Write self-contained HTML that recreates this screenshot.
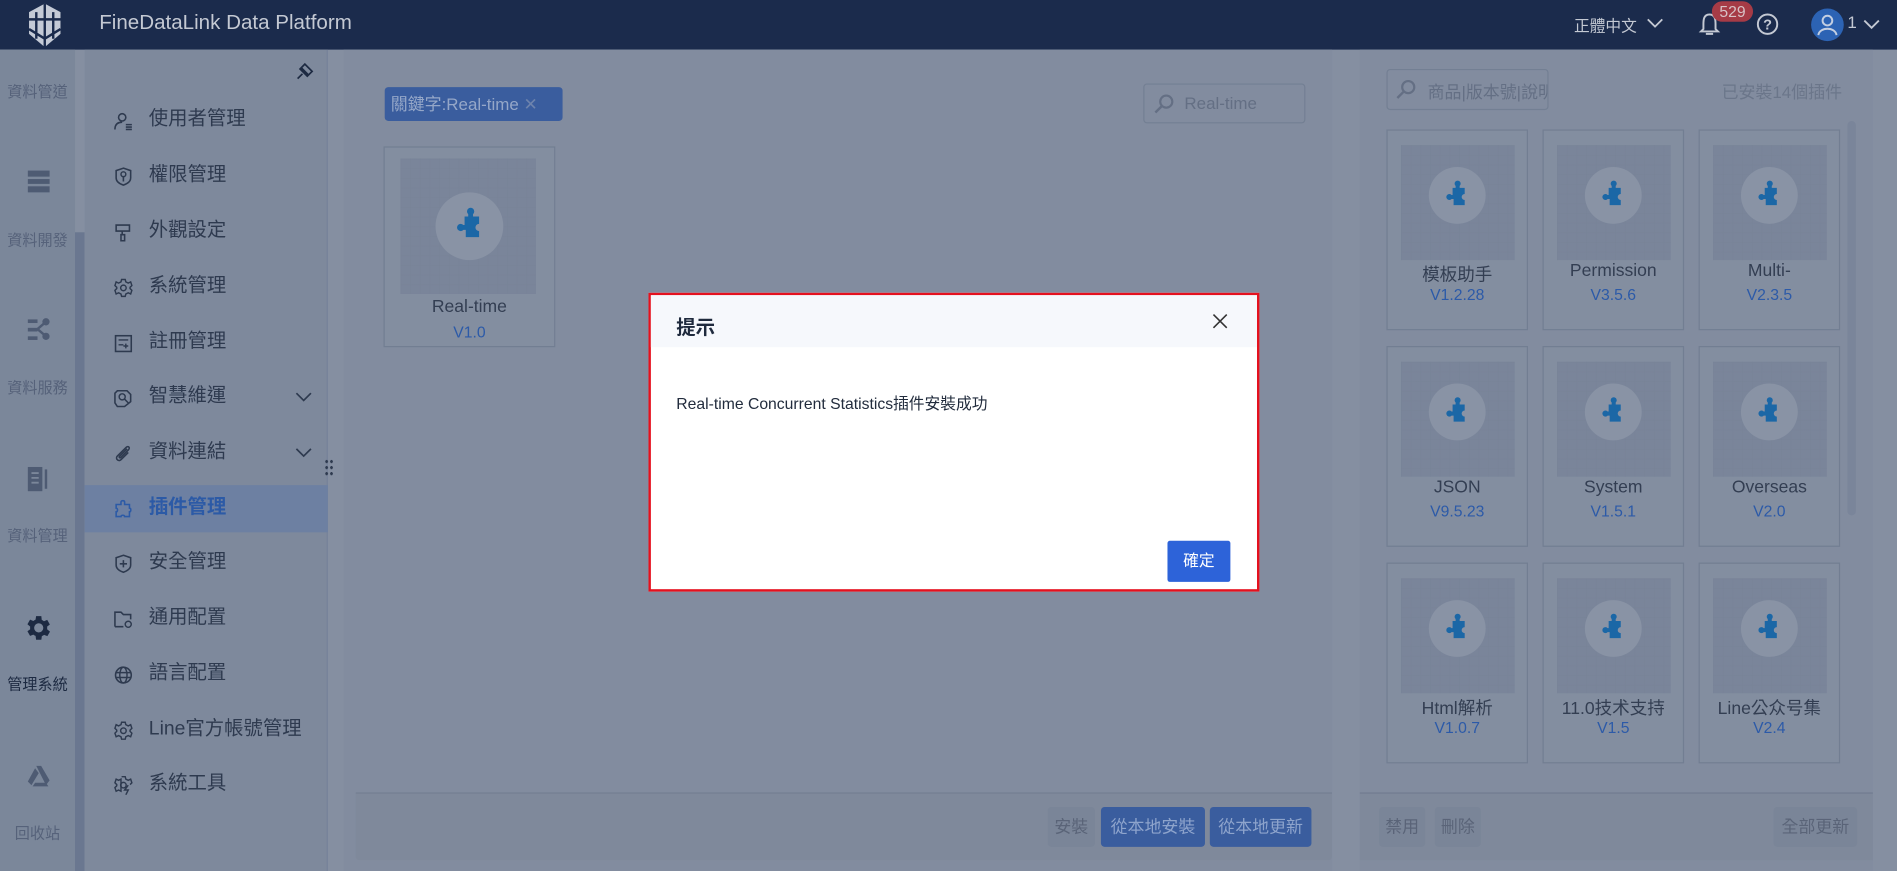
<!DOCTYPE html>
<html><head><meta charset="utf-8"><style>
*{box-sizing:border-box;margin:0;padding:0}
html,body{width:1897px;height:871px;overflow:hidden;background:#858fa1}
#s{position:absolute;left:0;top:0;width:1568px;height:720px;transform:scale(1.20982);transform-origin:0 0;font-family:"Liberation Sans","Noto Sans CJK TC",sans-serif;background:#858fa1}
.a{position:absolute}
.hdr{left:0;top:0;width:1568px;height:41px;background:#1b2b4c}
.rail{left:0;top:41px;width:62px;height:679px;background:#7b879a}
.rt{position:absolute;left:0;width:62px;text-align:center;font-size:12.5px;color:#56627a}
.sub{left:70px;top:41px;width:201px;height:679px;background:#7e899c;border-right:1px solid #76829a}
.mi{position:absolute;left:53px;font-size:16px;color:#2e3a4f;line-height:20px}
.ic{position:absolute;left:24px;width:16px;height:16px}
.panel{background:#828c9f}
.card{position:absolute;width:117px;height:166px;border:1px solid #727e92;background:#838ea0}
.card .im{position:absolute;left:11px;top:12px;width:94px;height:95px;background:#7a859a;background-image:linear-gradient(#76819555 1px,transparent 1px),linear-gradient(90deg,#76819555 1px,transparent 1px);background-size:8px 8px}
.card .ci{position:absolute;left:34px;top:30px;width:47px;height:47px;border-radius:50%;background:#8993a5}
.card .nm{position:absolute;left:0;width:100%;top:108px;text-align:center;font-size:14.5px;color:#333e52}
.card .vr{position:absolute;left:0;width:100%;top:128px;text-align:center;font-size:13px;color:#2c5aa8}
.btn{position:absolute;height:33px;border-radius:3px;font-size:14px;line-height:33px;text-align:center;color:#5a6478;background:#7a8598}
.bb{background:#3a5d9e;color:#8ea4cc}
</style></head><body><div id="s">
<div class="a hdr">
<svg class="a" style="left:22px;top:2px" width="30" height="38" viewBox="0 0 30 38"><path d="M15 1 L28 8 L28 26 L15 37 L2 26 L2 8Z" fill="#c4cad6"/><path d="M15 1 L15 37 M2 14 L28 14 M2 22 L15 30 L28 22 M8 8 L8 30 M22 8 L22 30" stroke="#1b2b4c" stroke-width="2" fill="none"/></svg>
<div class="a" style="left:82px;top:9px;font-size:17px;color:#c4c9d3">FineDataLink Data Platform</div>
<div class="a" style="left:1301px;top:11px;font-size:13px;color:#c4c9d3">正體中文</div>
<svg class="a" style="left:1361px;top:14px" width="14" height="10"><path d="M1 2 L7 8 L13 2" stroke="#c4c9d3" stroke-width="1.5" fill="none"/></svg>
<svg class="a" style="left:1404px;top:10px" width="18" height="20"><path d="M9 2 C4 2 4 7 4 10 L4 14 L2 16 L16 16 L14 14 L14 10 C14 7 14 2 9 2Z M6 18 L12 18" stroke="#c4c9d3" stroke-width="1.6" fill="none"/></svg>
<div class="a" style="left:1415px;top:1px;width:34px;height:17px;border-radius:9px;background:#a63b46;color:#d8c2c6;font-size:13px;text-align:center;line-height:17px">529</div>
<svg class="a" style="left:1451px;top:10px" width="20" height="20"><circle cx="10" cy="10" r="8" stroke="#c4c9d3" stroke-width="1.6" fill="none"/><text x="10" y="14.5" font-size="12" text-anchor="middle" fill="#c4c9d3" font-family="Liberation Sans" font-weight="bold">?</text></svg>
<div class="a" style="left:1497px;top:7px;width:27px;height:27px;border-radius:50%;background:#2c63b4"></div>
<svg class="a" style="left:1497px;top:7px" width="27" height="27"><circle cx="13.5" cy="10" r="4" stroke="#c4cfe2" stroke-width="1.6" fill="none"/><path d="M6 22 C7 15 20 15 21 22" stroke="#c4cfe2" stroke-width="1.6" fill="none"/></svg>
<div class="a" style="left:1527px;top:10px;font-size:14px;color:#c4c9d3">1</div>
<svg class="a" style="left:1540px;top:15px" width="14" height="10"><path d="M1 2 L7 8 L13 2" stroke="#c4c9d3" stroke-width="1.5" fill="none"/></svg>
</div>
<div class="a rail">
<div class="rt" style="top:24px">資料管道</div>
<svg class="a" style="left:22px;top:99px" width="20" height="20"><rect x="1" y="1" width="18" height="5" fill="#4e5b73"/><rect x="1" y="8" width="18" height="4" fill="#4e5b73"/><rect x="1" y="14" width="18" height="5" fill="#4e5b73"/></svg>
<div class="rt" style="top:147px">資料開發</div>
<svg class="a" style="left:22px;top:221px" width="20" height="20"><rect x="1" y="2" width="8" height="3" fill="#4e5b73"/><rect x="1" y="9" width="8" height="3" fill="#4e5b73"/><rect x="1" y="16" width="8" height="3" fill="#4e5b73"/><circle cx="16" cy="4" r="3" fill="#4e5b73"/><circle cx="16" cy="16" r="3" fill="#4e5b73"/><path d="M9 10 L16 4 M9 10 L16 16" stroke="#4e5b73" stroke-width="2"/></svg>
<div class="rt" style="top:269px">資料服務</div>
<svg class="a" style="left:22px;top:344px" width="20" height="22"><rect x="1" y="1" width="12" height="20" fill="#4e5b73"/><rect x="15" y="3" width="2" height="16" fill="#4e5b73"/><path d="M4 6 H10 M4 10 H10 M4 14 H10" stroke="#7b879a" stroke-width="1.5"/></svg>
<div class="rt" style="top:391px">資料管理</div>
<svg class="a" style="left:19px;top:465px" width="26" height="26" viewBox="0 0 24 24"><path fill="#1d2a42" d="M19.4 13a7.5 7.5 0 000-2l2.1-1.6-2-3.5-2.5 1a7 7 0 00-1.7-1L15 3h-4l-.4 2.7a7 7 0 00-1.7 1l-2.5-1-2 3.5L6.5 11a7.5 7.5 0 000 2l-2.1 1.6 2 3.5 2.5-1a7 7 0 001.7 1L11 21h4l.4-2.7a7 7 0 001.7-1l2.5 1 2-3.5zM13 15.5a3.5 3.5 0 110-7 3.5 3.5 0 010 7z" transform="translate(-1 0)"/></svg>
<div class="rt" style="top:514px;color:#1d2a42">管理系統</div>
<svg class="a" style="left:22px;top:590px" width="20" height="20"><path d="M8 2 L12 2 L19 14 L16 18 Z" fill="#4e5b73"/><path d="M7 4 L1 15 L4 18 L10 8Z" fill="#4e5b73"/><path d="M5 19 L18 19 L16 16 L7 16Z" fill="#4e5b73"/></svg>
<div class="rt" style="top:637px">回收站</div>
</div>
<div class="a" style="left:62px;top:192px;width:8px;height:528px;background:#6a7790"></div>
<div class="a sub">
<svg class="a" style="left:173px;top:10px" width="17" height="17"><path d="M3 14 L7 10 M6 5 L12 11 M9 2 L15 8 L11 12 L5 6Z" stroke="#1d2a42" stroke-width="1.4" fill="none"/></svg>
<div class="a" style="left:0;top:360px;width:201px;height:39px;background:#6d80a2"></div>
<svg class="ic" style="top:51px" viewBox="0 0 16 16"><circle cx="7" cy="5" r="3" stroke="#2e3a4f" stroke-width="1.3" fill="none"/><path d="M1 15 C1 10 4 9 7 9 M10 11 H15 M10 13 H15 M10 15 H15" stroke="#2e3a4f" stroke-width="1.3" fill="none"/></svg><div class="mi" style="top:48px">使用者管理</div>
<svg class="ic" style="top:97px" viewBox="0 0 16 16"><path d="M8 1 L14 3 L14 9 C14 12 11 14 8 15 C5 14 2 12 2 9 L2 3Z" stroke="#2e3a4f" stroke-width="1.3" fill="none"/><circle cx="8" cy="6" r="2" stroke="#2e3a4f" stroke-width="1.2" fill="none"/><path d="M8 8 V12" stroke="#2e3a4f" stroke-width="1.3"/></svg><div class="mi" style="top:94px">權限管理</div>
<svg class="ic" style="top:143px" viewBox="0 0 16 16"><path d="M2 2 H13 V7 H2Z M7 7 V10 M6 10 H9 V15 H6Z" stroke="#2e3a4f" stroke-width="1.3" fill="none"/></svg><div class="mi" style="top:140px">外觀設定</div>
<svg class="ic" style="top:189px" viewBox="0 0 16 16"><path d="M6.5 1 H9.5 L10 3 L12 4 L14 3 L15 6 L13.5 7.5 V8.5 L15 10 L14 13 L12 12 L10 13 L9.5 15 H6.5 L6 13 L4 12 L2 13 L1 10 L2.5 8.5 V7.5 L1 6 L2 3 L4 4 L6 3Z" stroke="#2e3a4f" stroke-width="1.2" fill="none"/><circle cx="8" cy="8" r="2.3" stroke="#2e3a4f" stroke-width="1.2" fill="none"/></svg><div class="mi" style="top:186px">系統管理</div>
<svg class="ic" style="top:235px" viewBox="0 0 16 16"><rect x="1.5" y="1.5" width="13" height="13" stroke="#2e3a4f" stroke-width="1.3" fill="none"/><path d="M4 5 H12 M4 9 H8 M10 8 V12 M8 10 H12" stroke="#2e3a4f" stroke-width="1.2"/></svg><div class="mi" style="top:232px">註冊管理</div>
<svg class="ic" style="top:280px" viewBox="0 0 16 16"><path d="M3 2 H11 L14 5 V11 L9 15 H3 L1 12 V4Z" stroke="#2e3a4f" stroke-width="1.3" fill="none"/><circle cx="7" cy="7" r="2.5" stroke="#2e3a4f" stroke-width="1.2" fill="none"/><path d="M9 9 L12 12" stroke="#2e3a4f" stroke-width="1.3"/></svg><div class="mi" style="top:277px">智慧維運</div>
<svg class="a" style="left:174px;top:282px" width="14" height="10"><path d="M1 2 L7 8 L13 2" stroke="#2e3a4f" stroke-width="1.4" fill="none"/></svg>
<svg class="ic" style="top:326px" viewBox="0 0 16 16"><path d="M11 4 L5 10 C4 11 5 12 6 11 L12 5 C14 3 12 1 10 3 L3 10 C1 12 4 15 6 13 L12 7" stroke="#2e3a4f" stroke-width="1.3" fill="none"/></svg><div class="mi" style="top:323px">資料連結</div>
<svg class="a" style="left:174px;top:328px" width="14" height="10"><path d="M1 2 L7 8 L13 2" stroke="#2e3a4f" stroke-width="1.4" fill="none"/></svg>
<svg class="ic" style="top:372px" viewBox="0 0 16 16"><path d="M6 2 C6 0.5 9 0.5 9 2 V4 H13 V7 C14.5 7 14.5 10 13 10 V14 H9 C9 12.5 6 12.5 6 14 H2 V10 C3.5 10 3.5 7 2 7 V4 H6Z" stroke="#2c5aa6" stroke-width="1.3" fill="none"/></svg><div class="mi" style="top:369px;color:#2c5aa6;font-weight:bold">插件管理</div>
<svg class="ic" style="top:417px" viewBox="0 0 16 16"><path d="M8 1 L14 3 L14 9 C14 12 11 14 8 15 C5 14 2 12 2 9 L2 3Z M8 5 V11 M5 8 H11" stroke="#2e3a4f" stroke-width="1.3" fill="none"/></svg><div class="mi" style="top:414px">安全管理</div>
<svg class="ic" style="top:463px" viewBox="0 0 16 16"><path d="M1 14 V2 H6 L8 4 H14 V8 M1 14 H8" stroke="#2e3a4f" stroke-width="1.3" fill="none"/><circle cx="12" cy="12" r="2.5" stroke="#2e3a4f" stroke-width="1.2" fill="none"/></svg><div class="mi" style="top:460px">通用配置</div>
<svg class="ic" style="top:509px" viewBox="0 0 16 16"><circle cx="8" cy="8" r="6.5" stroke="#2e3a4f" stroke-width="1.3" fill="none"/><ellipse cx="8" cy="8" rx="3" ry="6.5" stroke="#2e3a4f" stroke-width="1.2" fill="none"/><path d="M1.5 6 H14.5 M1.5 10 H14.5" stroke="#2e3a4f" stroke-width="1.2"/></svg><div class="mi" style="top:506px">語言配置</div>
<svg class="ic" style="top:555px" viewBox="0 0 16 16"><path d="M6.5 1 H9.5 L10 3 L12 4 L14 3 L15 6 L13.5 7.5 V8.5 L15 10 L14 13 L12 12 L10 13 L9.5 15 H6.5 L6 13 L4 12 L2 13 L1 10 L2.5 8.5 V7.5 L1 6 L2 3 L4 4 L6 3Z" stroke="#2e3a4f" stroke-width="1.2" fill="none"/><circle cx="8" cy="8" r="2.3" stroke="#2e3a4f" stroke-width="1.2" fill="none"/></svg><div class="mi" style="top:552px">Line官方帳號管理</div>
<svg class="ic" style="top:600px" viewBox="0 0 16 16"><path d="M6.5 1 H9.5 L10 3 L12 4 L14 3 L15 6 L13.5 7.5 M6 13 L4 12 L2 13 L1 10 L2.5 8.5 V7.5 L1 6 L2 3 L4 4 L6 3Z" stroke="#2e3a4f" stroke-width="1.2" fill="none"/><circle cx="8" cy="8" r="2.3" stroke="#2e3a4f" stroke-width="1.2" fill="none"/><path d="M12 8 L9 12 H12 L10 16" stroke="#2e3a4f" stroke-width="1.2" fill="none"/></svg><div class="mi" style="top:597px">系統工具</div>
</div>
<div class="a" style="left:268px;top:379px;width:8px;height:16px;background-image:radial-gradient(#2e3a4f 1px,transparent 1.2px);background-size:4px 5px"></div>
<div class="a panel" style="left:284px;top:41px;width:817px;height:679px"></div>
<div class="a" style="left:318px;top:72px;width:147px;height:28px;border-radius:3px;background:#3a5d9e;color:#95a7c8;font-size:14px;line-height:28px;padding-left:5px">關鍵字:Real-time <span style="color:#6d83ad">✕</span></div>
<div class="a" style="left:945px;top:69px;width:134px;height:33px;border:1px solid #737f93;border-radius:3px"></div>
<svg class="a" style="left:953px;top:77px" width="18" height="18"><circle cx="11" cy="7" r="5" stroke="#646f84" stroke-width="1.8" fill="none"/><path d="M7 11 L2 16" stroke="#646f84" stroke-width="2"/></svg>
<div class="a" style="left:979px;top:77px;font-size:14px;color:#646f84">Real-time</div>
<div class="card" style="left:317px;top:121px;width:142px;height:166px"><div class="im" style="left:13px;top:9px;width:112px;height:112px"></div><div class="ci" style="left:42px;top:37px;width:56px;height:56px"></div><svg class="a" style="left:52px;top:47px" width="36" height="36" viewBox="0 0 36 36"><path fill="#1b67a6" d="M14 10 h3 v-2 a3 3 0 1 1 4 0 v2 h5 v6 a3 3 0 1 0 0 6 v5 h-11 v-6 h-2 a3 3 0 1 1 0 -4 h1z"/></svg><div class="nm" style="top:124px">Real-time</div><div class="vr" style="top:145px">V1.0</div></div>
<div class="a" style="left:294px;top:655px;width:807px;height:56px;background:#7f899b;border-top:1px solid #717c90;border-radius:0 0 3px 3px"></div>
<div class="btn" style="left:866px;top:667px;width:39px">安裝</div>
<div class="btn bb" style="left:910px;top:667px;width:86px">從本地安裝</div>
<div class="btn bb" style="left:1000px;top:667px;width:84px">從本地更新</div>
<div class="a panel" style="left:1124px;top:41px;width:424px;height:679px"></div>
<div class="a" style="left:1146px;top:57px;width:134px;height:34px;border:1px solid #737f93;border-radius:3px;overflow:hidden;white-space:nowrap"><svg class="a" style="left:6px;top:7px" width="18" height="18"><circle cx="11" cy="7" r="5" stroke="#646f84" stroke-width="1.8" fill="none"/><path d="M7 11 L2 16" stroke="#646f84" stroke-width="2"/></svg><span class="a" style="left:33px;top:8px;font-size:14px;color:#646f84">商品|版本號|說明</span></div>
<div class="a" style="left:1423px;top:66px;font-size:14px;color:#6b768a">已安裝14個插件</div>
<div class="a" style="left:1527px;top:100px;width:7px;height:326px;border-radius:4px;background:#7a859a"></div>
<div id="cards"></div>
<div class="a" style="left:1124px;top:655px;width:424px;height:56px;background:#7f899b;border-top:1px solid #717c90"></div>
<div class="btn" style="left:1140px;top:667px;width:38px">禁用</div>
<div class="btn" style="left:1186px;top:667px;width:38px">刪除</div>
<div class="btn" style="left:1466px;top:667px;width:69px">全部更新</div>
<div class="a" style="left:536px;top:242px;width:505px;height:247px;border:2px solid #e5111e;background:#fff">
<div class="a" style="left:0;top:0;width:501px;height:43px;background:#f6f8fc"></div>
<div class="a" style="left:21px;top:13px;font-size:16px;font-weight:bold;color:#1f2a3d">提示</div>
<svg class="a" style="left:464px;top:15px" width="13" height="13"><path d="M1 1 L12 12 M12 1 L1 12" stroke="#333" stroke-width="1.3"/></svg>
<div class="a" style="left:21px;top:79px;font-size:13px;color:#222c3d">Real-time Concurrent Statistics插件安裝成功</div>
<div class="a" style="left:427px;top:203px;width:52px;height:34px;border-radius:2px;background:#2d63d9;color:#fff;font-size:13px;text-align:center;line-height:34px">確定</div>
</div>
</div>
<script>
var d=[["模板助手","V1.2.28"],["Permission","V3.5.6"],["Multi-","V2.3.5"],["JSON","V9.5.23"],["System","V1.5.1"],["Overseas","V2.0"],["Html解析","V1.0.7"],["11.0技术支持","V1.5"],["Line公众号集","V2.4"]];
var xs=[1146,1275,1404],ys=[107,286,465],h="";
d.forEach(function(c,i){var x=xs[i%3],y=ys[Math.floor(i/3)];
h+='<div class="card" style="left:'+x+'px;top:'+y+'px"><div class="im"></div><div class="ci"></div><svg class="a" style="left:42px;top:39px" width="30" height="30" viewBox="0 0 36 36"><path fill="#1b67a6" d="M14 10 h3 v-2 a3 3 0 1 1 4 0 v2 h5 v6 a3 3 0 1 0 0 6 v5 h-11 v-6 h-2 a3 3 0 1 1 0 -4 h1z"/></svg><div class="nm">'+c[0]+'</div><div class="vr">'+c[1]+'</div></div>';});
document.getElementById("cards").outerHTML=h;
</script>
</body></html>
